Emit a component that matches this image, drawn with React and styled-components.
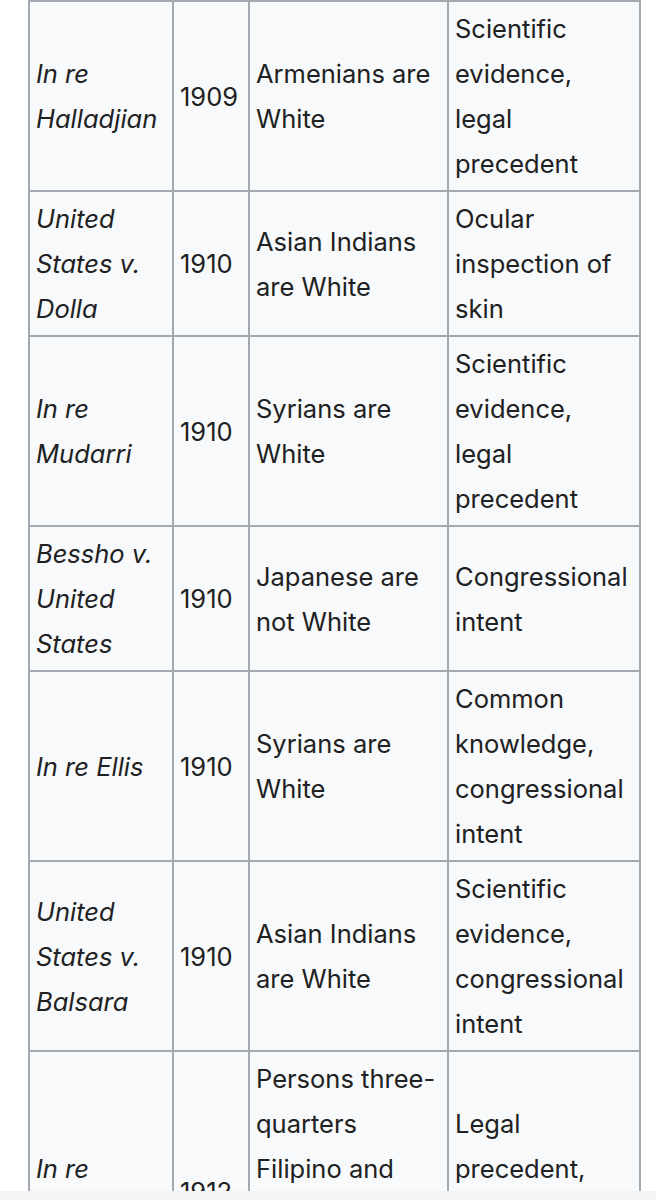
import React from 'react';
import styled, { createGlobalStyle } from 'styled-components';

const GlobalStyle = createGlobalStyle`
  html, body {
    margin: 0;
    padding: 0;
    background: #ffffff;
  }
  body {
    font-family: Inter, "Noto Sans", "Liberation Sans", sans-serif;
    color: #202122;
  }
`;

const Page = styled.div`
  width: 656px;
  height: 1200px;
  overflow: hidden;
  padding-left: 28px;
  box-sizing: border-box;
`;

const Table = styled.table`
  border-collapse: collapse;
  table-layout: fixed;
  width: 611px;
  background: #f8f9fa;
  font-size: 25.5px;
  line-height: 45px;
`;

const Col = styled.col`
  width: ${p => p.$w}px;
`;

const Cell = styled.td`
  border: 2px solid #a2a9b1;
  padding: 4px 6px;
  vertical-align: middle;
  text-align: left;
  font-style: ${p => (p.$italic ? 'italic' : 'normal')};
  white-space: nowrap;
  overflow: hidden;
`;

const BottomBar = styled.div`
  position: fixed;
  left: 0;
  right: 0;
  bottom: 0;
  height: 9px;
  background: #f4f4f4;
`;

const rows = [
  { name: ['In re', 'Halladjian'], year: '1909', result: ['Armenians are', 'White'], reason: ['Scientific', 'evidence,', 'legal', 'precedent'] },
  { name: ['United', 'States v.', 'Dolla'], year: '1910', result: ['Asian Indians', 'are White'], reason: ['Ocular', 'inspection of', 'skin'] },
  { name: ['In re', 'Mudarri'], year: '1910', result: ['Syrians are', 'White'], reason: ['Scientific', 'evidence,', 'legal', 'precedent'] },
  { name: ['Bessho v.', 'United', 'States'], year: '1910', result: ['Japanese are', 'not White'], reason: ['Congressional', 'intent'] },
  { name: ['In re Ellis'], year: '1910', result: ['Syrians are', 'White'], reason: ['Common', 'knowledge,', 'congressional', 'intent'] },
  { name: ['United', 'States v.', 'Balsara'], year: '1910', result: ['Asian Indians', 'are White'], reason: ['Scientific', 'evidence,', 'congressional', 'intent'] },
  { name: ['In re', 'Alverto'], year: '1912', result: ['Persons three-', 'quarters', 'Filipino and', 'one-quarter', 'White are not', 'White'], reason: ['Legal', 'precedent,', 'congressional', 'intent'] },
];

const Lines = ({ lines }) =>
  lines.map((l, i) => (
    <React.Fragment key={i}>
      {i > 0 && <br />}
      {l}
    </React.Fragment>
  ));

export default function App() {
  return (
    <>
      <GlobalStyle />
      <Page>
        <Table>
          <colgroup>
            <Col $w={144} />
            <Col $w={76} />
            <Col $w={199} />
            <Col $w={192} />
          </colgroup>
          <tbody>
            {rows.map((r, i) => (
              <tr key={i}>
                <Cell $italic><Lines lines={r.name} /></Cell>
                <Cell>{r.year}</Cell>
                <Cell><Lines lines={r.result} /></Cell>
                <Cell><Lines lines={r.reason} /></Cell>
              </tr>
            ))}
          </tbody>
        </Table>
      </Page>
      <BottomBar />
    </>
  );
}
